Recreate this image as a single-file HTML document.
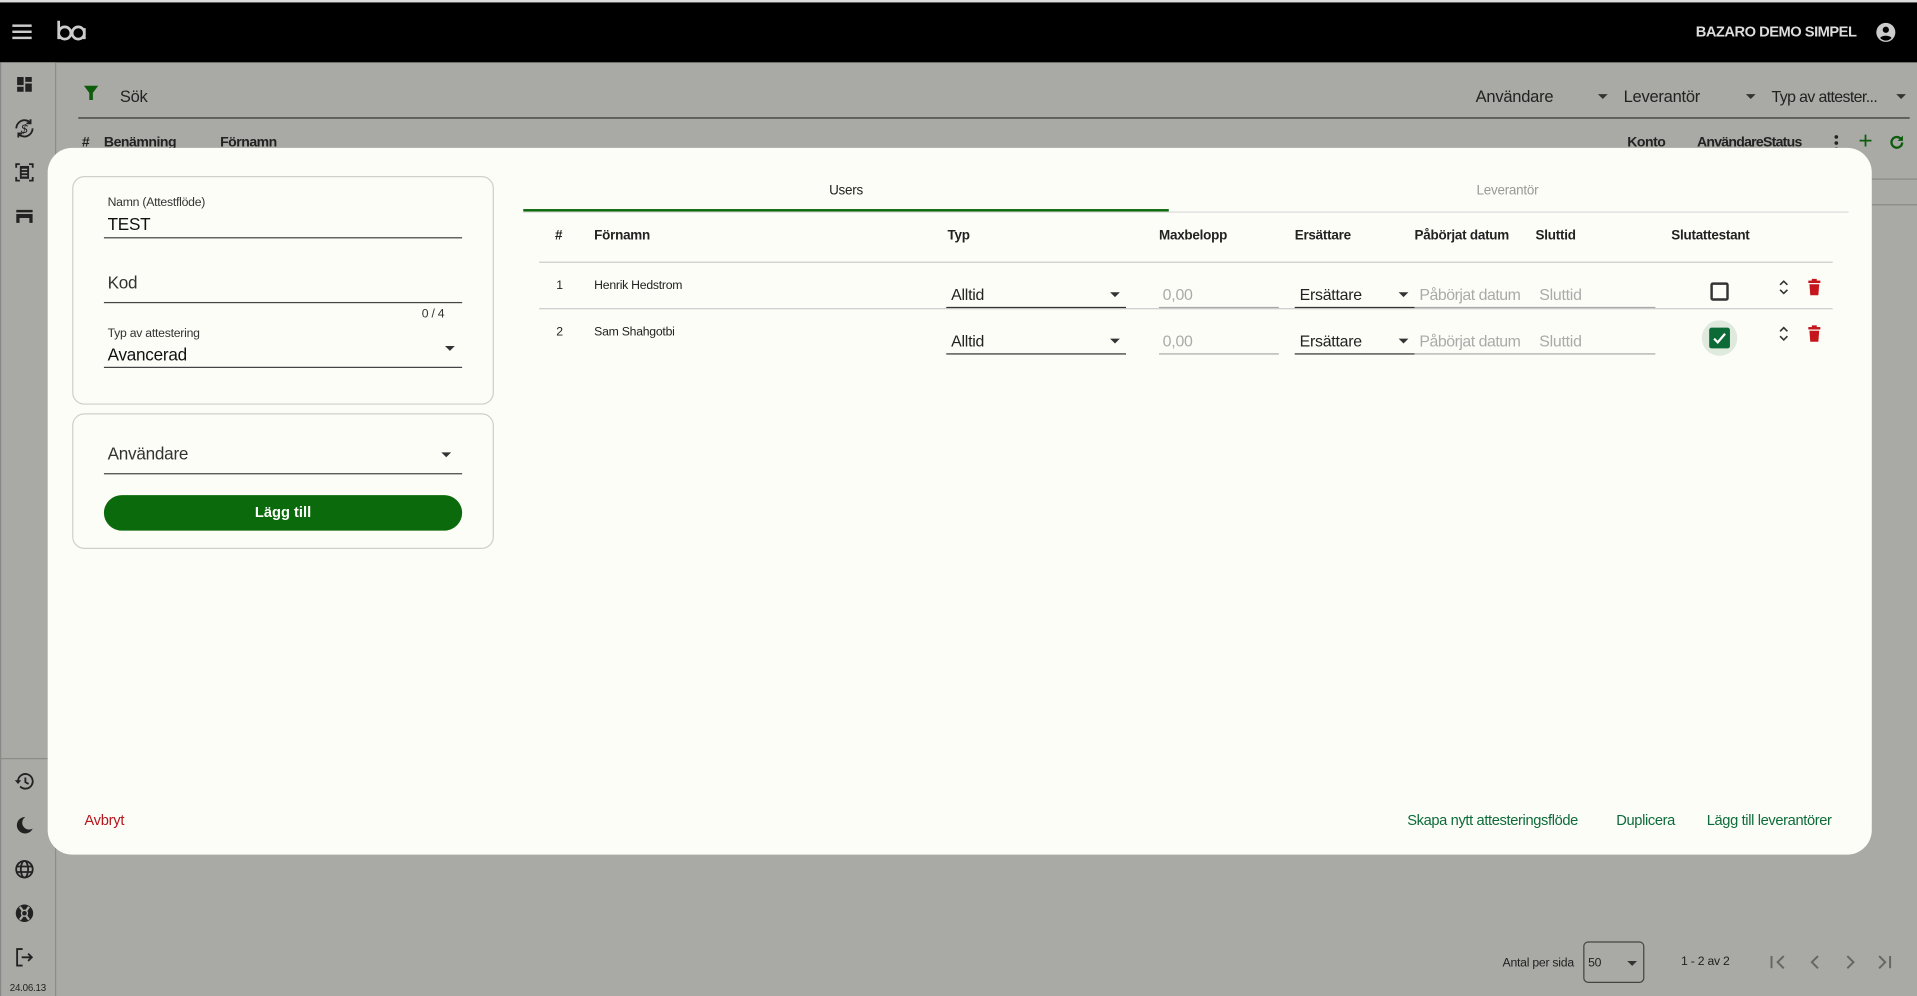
<!DOCTYPE html>
<html><head><meta charset="utf-8"><style>
html,body{margin:0;padding:0;width:1917px;height:996px;overflow:hidden;background:#a9aaa5;}
#w{position:absolute;left:0;top:0;width:1568px;height:815px;transform:scale(1.22258);transform-origin:0 0;font-family:"Liberation Sans",sans-serif;color:#222;}
.a{position:absolute;white-space:nowrap;}
.t{position:absolute;white-space:nowrap;transform:translateY(-50%);letter-spacing:-0.2px;}
.ln{position:absolute;height:1px;}
.arr{position:absolute;width:0;height:0;border-left:4px solid transparent;border-right:4px solid transparent;border-top:4px solid #333;}
svg{position:absolute;}
</style></head><body><div id="w">
<!-- top bar -->
<div class="a" style="left:0;top:0;width:1568px;height:2px;background:#ddd"></div>
<div class="a" style="left:0;top:2px;width:1568px;height:49px;background:#000"></div>
<svg style="left:10px;top:19px" width="16" height="14"><rect x="0" y="1" width="16" height="2" fill="#ccc"/><rect x="0" y="6" width="16" height="2" fill="#ccc"/><rect x="0" y="11" width="16" height="2" fill="#ccc"/></svg>
<svg style="left:45px;top:15px" width="28" height="22"><path d="M3 2 V17 M3 12 a5 5 0 1 0 10 0 a5 5 0 1 0 -10 0 M14 12 a5 5 0 1 0 10 0 a5 5 0 1 0 -10 0 M24 8 V17" stroke="#ccc" stroke-width="2.2" fill="none"/></svg>
<div class="t" style="left:1387px;top:26px;color:#ddd;font-weight:bold;font-size:12px;letter-spacing:-0.4px">BAZARO DEMO SIMPEL</div>
<svg style="left:1534px;top:18px" width="17" height="17" viewBox="0 0 24 24"><circle cx="12" cy="12" r="11" fill="#ccc"/><circle cx="12" cy="9" r="3.6" fill="#000"/><path d="M5.5 18.5 C7 15 17 15 18.5 18.5 C17 20 15 21.5 12 21.5 C9 21.5 7 20 5.5 18.5Z" fill="#000"/></svg>
<!-- sidebar -->
<div class="a" style="left:0;top:51px;width:44px;height:764px;background:#a9aaa5;border-right:1px solid #8b8c88;border-left:1px solid #888"></div>
<div class="ln" style="left:0;top:620px;width:44px;background:#8b8c88"></div>
<svg style="left:12px;top:61px" width="16" height="16" viewBox="0 0 24 24"><path d="M3 13h8V3H3v10zm0 8h8v-6H3v6zm10 0h8V11h-8v10zm0-18v6h8V3h-8z" fill="#222"/></svg>
<svg style="left:10px;top:95px" width="20" height="20" viewBox="0 0 24 24"><path d="M4 12a8 8 0 0 1 14-5.3M20 12a8 8 0 0 1-14 5.3M18 3v4h-4M6 21v-4h4" stroke="#222" stroke-width="1.8" fill="none"/><text x="8.5" y="16.5" font-size="12" font-family="Liberation Sans" fill="#222" font-style="italic">$</text></svg>
<svg style="left:11px;top:132px" width="18" height="18" viewBox="0 0 24 24"><path d="M3 7V3h4M17 3h4v4M21 17v4h-4M7 21H3v-4" stroke="#222" stroke-width="2" fill="none"/><rect x="7" y="5" width="10" height="14" fill="#222"/><rect x="9" y="8" width="6" height="1.5" fill="#a9aaa5"/><rect x="9" y="11.5" width="6" height="1.5" fill="#a9aaa5"/><rect x="9" y="15" width="6" height="1.5" fill="#a9aaa5"/></svg>
<svg style="left:12px;top:169px" width="16" height="16" viewBox="0 0 24 24"><path d="M2 4h20v3H2zM2 9h20v11h-4v-6H6v6H2z" fill="#222"/></svg>
<svg style="left:11px;top:630px" width="18" height="18" viewBox="0 0 24 24"><path d="M5 12a8 8 0 1 1 2.3 5.7" stroke="#222" stroke-width="2" fill="none"/><path d="M1.5 11h7l-3.5 4z" fill="#222"/><path d="M13 8v5l3.5 2" stroke="#222" stroke-width="2" fill="none"/></svg>
<svg style="left:11px;top:666px" width="18" height="18" viewBox="0 0 24 24"><path d="M13 3a9 9 0 1 0 8 12.5A7 7 0 0 1 13 3z" fill="#222"/></svg>
<svg style="left:11px;top:702px" width="18" height="18" viewBox="0 0 24 24"><circle cx="12" cy="12" r="9" stroke="#222" stroke-width="2" fill="none"/><ellipse cx="12" cy="12" rx="4" ry="9" stroke="#222" stroke-width="2" fill="none"/><path d="M3 9h18M3 15h18" stroke="#222" stroke-width="2"/></svg>
<svg style="left:11px;top:738px" width="18" height="18" viewBox="0 0 24 24"><circle cx="12" cy="12" r="9.5" fill="#222"/><circle cx="12" cy="12" r="4" fill="#a9aaa5"/><circle cx="12" cy="12" r="2.5" fill="#222"/><path d="M7 5l3 4M17 5l-3 4M7 19l3-4M17 19l-3-4" stroke="#a9aaa5" stroke-width="2.5"/></svg>
<svg style="left:11px;top:774px" width="18" height="18" viewBox="0 0 24 24"><path d="M10 3H4v18h6" stroke="#222" stroke-width="2" fill="none"/><path d="M9 12h11M16 8l4 4-4 4" stroke="#222" stroke-width="2" fill="none"/></svg>
<div class="t" style="left:8px;top:808px;font-size:8px;color:#222">24.06.13</div>
<!-- background page -->
<svg style="left:67px;top:69px" width="15" height="14" viewBox="0 0 24 24"><path d="M2 2h20l-7.5 10v10h-5V12z" fill="#0c5c0c"/></svg>
<div class="t" style="left:98px;top:79px;font-size:13.5px;color:#222">Sök</div>
<div class="ln" style="left:64px;top:96px;width:1498px;background:#333"></div>
<div class="t" style="left:1207px;top:79px;font-size:13.5px">Användare</div><div class="arr" style="left:1307px;top:77px"></div>
<div class="t" style="left:1328px;top:79px;font-size:13.5px">Leverantör</div><div class="arr" style="left:1428px;top:77px"></div>
<div class="t" style="left:1449px;top:79px;font-size:13px;letter-spacing:-0.5px">Typ av attester...</div><div class="arr" style="left:1551px;top:77px"></div>
<div class="t" style="left:67px;top:117px;font-size:11.5px;font-weight:bold">#</div>
<div class="t" style="left:85px;top:117px;font-size:11.5px;font-weight:bold;letter-spacing:-0.4px">Benämning</div>
<div class="t" style="left:180px;top:117px;font-size:11.5px;font-weight:bold;letter-spacing:-0.4px">Förnamn</div>
<div class="t" style="left:1331px;top:117px;font-size:11.5px;font-weight:bold;letter-spacing:-0.4px">Konto</div>
<div class="t" style="left:1388px;top:117px;font-size:11.5px;font-weight:bold;letter-spacing:-0.6px">AnvändareStatus</div>
<svg style="left:1500px;top:110px" width="4" height="14"><circle cx="2" cy="2" r="1.5" fill="#222"/><circle cx="2" cy="7" r="1.5" fill="#222"/><circle cx="2" cy="12" r="1.5" fill="#222"/></svg>
<div class="t" style="left:1520px;top:116px;font-size:20px;color:#0c5c0c">+</div>
<svg style="left:1544px;top:109px" width="15" height="15" viewBox="0 0 24 24"><path d="M19 12a7 7 0 1 1-2-5" stroke="#0c5c0c" stroke-width="3" fill="none"/><path d="M20 3v7h-7z" fill="#0c5c0c"/></svg>
<div class="ln" style="left:1531px;top:146px;width:37px;background:#888"></div>
<div class="ln" style="left:1531px;top:167px;width:37px;background:#888"></div>
<!-- dialog -->
<div class="a" style="left:39px;top:121px;width:1492px;height:578px;background:#fcfdf7;border-radius:20px"></div>
<div class="a" style="left:59px;top:144px;width:343px;height:185px;border:1px solid #cfd0cb;border-radius:10px"></div>
<div class="t" style="left:88px;top:166px;font-size:10px;color:#333">Namn (Attestflöde)</div>
<div class="t" style="left:88px;top:183px;font-size:14px;color:#111">TEST</div>
<div class="ln" style="left:85px;top:194px;width:293px;background:#444"></div>
<div class="t" style="left:88px;top:231px;font-size:14px;color:#333">Kod</div>
<div class="ln" style="left:85px;top:247px;width:293px;background:#444"></div>
<div class="t" style="left:345px;top:257px;font-size:10px;color:#333">0 / 4</div>
<div class="t" style="left:88px;top:273px;font-size:10px;color:#333">Typ av attestering</div>
<div class="t" style="left:88px;top:290px;font-size:14px;color:#111">Avancerad</div>
<div class="arr" style="left:364px;top:283px"></div>
<div class="ln" style="left:85px;top:300px;width:293px;background:#444"></div>
<div class="a" style="left:59px;top:338px;width:343px;height:109px;border:1px solid #cfd0cb;border-radius:10px"></div>
<div class="t" style="left:88px;top:371px;font-size:14px;color:#333">Användare</div>
<div class="arr" style="left:361px;top:370px"></div>
<div class="ln" style="left:85px;top:387px;width:293px;background:#444"></div>
<div class="a" style="left:85px;top:405px;width:293px;height:29px;background:#0b6a0b;border-radius:15px;color:#fff;font-weight:bold;font-size:12px;text-align:center;line-height:29px">Lägg till</div>
<!-- tabs -->
<div class="t" style="left:692px;top:156px;font-size:11px;transform:translate(-50%,-50%);color:#222">Users</div>
<div class="t" style="left:1233px;top:156px;font-size:11px;transform:translate(-50%,-50%);color:#999">Leverantör</div>
<div class="ln" style="left:428px;top:173px;width:1084px;background:#ddd"></div>
<div class="a" style="left:428px;top:171px;width:528px;height:2px;background:#0b6a0b"></div>
<!-- table -->
<div class="t" style="left:454px;top:193px;font-size:11px;font-weight:bold">#</div>
<div class="t" style="left:486px;top:193px;font-size:11px;font-weight:bold">Förnamn</div>
<div class="t" style="left:775px;top:193px;font-size:11px;font-weight:bold">Typ</div>
<div class="t" style="left:948px;top:193px;font-size:11px;font-weight:bold">Maxbelopp</div>
<div class="t" style="left:1059px;top:193px;font-size:11px;font-weight:bold">Ersättare</div>
<div class="t" style="left:1157px;top:193px;font-size:11px;font-weight:bold">Påbörjat datum</div>
<div class="t" style="left:1256px;top:193px;font-size:11px;font-weight:bold">Sluttid</div>
<div class="t" style="left:1367px;top:193px;font-size:11px;font-weight:bold">Slutattestant</div>
<div class="ln" style="left:441px;top:214px;width:1058px;background:#ccc"></div>
<div class="ln" style="left:441px;top:252px;width:1058px;background:#ccc"></div>

<div class="t" style="left:455px;top:234px;font-size:10px">1</div>
<div class="t" style="left:486px;top:234px;font-size:10px">Henrik Hedstrom</div>
<div class="t" style="left:455px;top:272px;font-size:10px">2</div>
<div class="t" style="left:486px;top:272px;font-size:10px">Sam Shahgotbi</div>

<div class="t" style="left:778px;top:241px;font-size:13px">Alltid</div><div class="arr" style="left:908px;top:239px"></div>
<div class="ln" style="left:774px;top:251px;width:147px;background:#333"></div>
<div class="t" style="left:951px;top:241px;font-size:13px;color:#aaa">0,00</div>
<div class="ln" style="left:948px;top:251px;width:98px;background:#aaa"></div>
<div class="t" style="left:1063px;top:241px;font-size:13px">Ersättare</div><div class="arr" style="left:1144px;top:239px"></div>
<div class="ln" style="left:1059px;top:251px;width:98px;background:#333"></div>
<div class="t" style="left:1161px;top:241px;font-size:13px;color:#aaa;letter-spacing:-0.4px">Påbörjat datum</div>
<div class="t" style="left:1259px;top:241px;font-size:13px;color:#aaa">Sluttid</div>
<div class="ln" style="left:1157px;top:251px;width:197px;background:#aaa"></div>

<div class="t" style="left:778px;top:279px;font-size:13px">Alltid</div><div class="arr" style="left:908px;top:277px"></div>
<div class="ln" style="left:774px;top:289px;width:147px;background:#333"></div>
<div class="t" style="left:951px;top:279px;font-size:13px;color:#aaa">0,00</div>
<div class="ln" style="left:948px;top:289px;width:98px;background:#aaa"></div>
<div class="t" style="left:1063px;top:279px;font-size:13px">Ersättare</div><div class="arr" style="left:1144px;top:277px"></div>
<div class="ln" style="left:1059px;top:289px;width:98px;background:#333"></div>
<div class="t" style="left:1161px;top:279px;font-size:13px;color:#aaa;letter-spacing:-0.4px">Påbörjat datum</div>
<div class="t" style="left:1259px;top:279px;font-size:13px;color:#aaa">Sluttid</div>
<div class="ln" style="left:1157px;top:289px;width:197px;background:#aaa"></div>

<div class="a" style="left:1399px;top:231px;width:11px;height:11px;border:2px solid #333;border-radius:2px"></div>
<div class="a" style="left:1392px;top:262px;width:29px;height:29px;border-radius:50%;background:#dfe9dd"></div>
<div class="a" style="left:1398px;top:268px;width:17px;height:17px;background:#0b6a35;border-radius:2px"></div>
<svg style="left:1400px;top:270px" width="13" height="13"><path d="M2 7l3 3 6-7" stroke="#fff" stroke-width="1.8" fill="none"/></svg>
<svg style="left:1455px;top:228px" width="8" height="14"><path d="M1 5l3-3 3 3M1 9l3 3 3-3" stroke="#333" stroke-width="1.3" fill="none"/></svg>
<svg style="left:1455px;top:266px" width="8" height="14"><path d="M1 5l3-3 3 3M1 9l3 3 3-3" stroke="#333" stroke-width="1.3" fill="none"/></svg>
<svg style="left:1479px;top:228px" width="10" height="14" viewBox="0 0 10 14"><rect x="0" y="1.5" width="10" height="2" fill="#c4161c"/><rect x="3" y="0" width="4" height="2" fill="#c4161c"/><path d="M1 4.5h8l-.7 9H1.7z" fill="#c4161c"/></svg>
<svg style="left:1479px;top:266px" width="10" height="14" viewBox="0 0 10 14"><rect x="0" y="1.5" width="10" height="2" fill="#c4161c"/><rect x="3" y="0" width="4" height="2" fill="#c4161c"/><path d="M1 4.5h8l-.7 9H1.7z" fill="#c4161c"/></svg>
<!-- footer -->
<div class="t" style="left:69px;top:671px;font-size:12px;color:#b5161d">Avbryt</div>
<div class="t" style="left:1151px;top:671px;font-size:12px;color:#0d6b3a;letter-spacing:-0.3px">Skapa nytt attesteringsflöde</div>
<div class="t" style="left:1322px;top:671px;font-size:12px;color:#0d6b3a;letter-spacing:-0.3px">Duplicera</div>
<div class="t" style="left:1396px;top:671px;font-size:12px;color:#0d6b3a;letter-spacing:-0.3px">Lägg till leverantörer</div>
<!-- pagination -->
<div class="t" style="left:1229px;top:788px;font-size:10px;color:#222">Antal per sida</div>
<div class="a" style="left:1295px;top:770px;width:48px;height:32px;border:1px solid #444;border-radius:4px"></div>
<div class="t" style="left:1299px;top:788px;font-size:10px;color:#222">50</div>
<div class="arr" style="left:1331px;top:786px"></div>
<div class="t" style="left:1375px;top:787px;font-size:10px;color:#222">1 - 2 av 2</div>
<svg style="left:1447px;top:780px" width="110" height="14"><path d="M2 2v10M12 2l-5 5 5 5" stroke="#666" stroke-width="1.6" fill="none"/><path d="M40 2l-5 5 5 5" stroke="#666" stroke-width="1.6" fill="none"/><path d="M64 2l5 5-5 5" stroke="#666" stroke-width="1.6" fill="none"/><path d="M90 2l5 5-5 5M99 2v10" stroke="#666" stroke-width="1.6" fill="none"/></svg>
</div></body></html>
